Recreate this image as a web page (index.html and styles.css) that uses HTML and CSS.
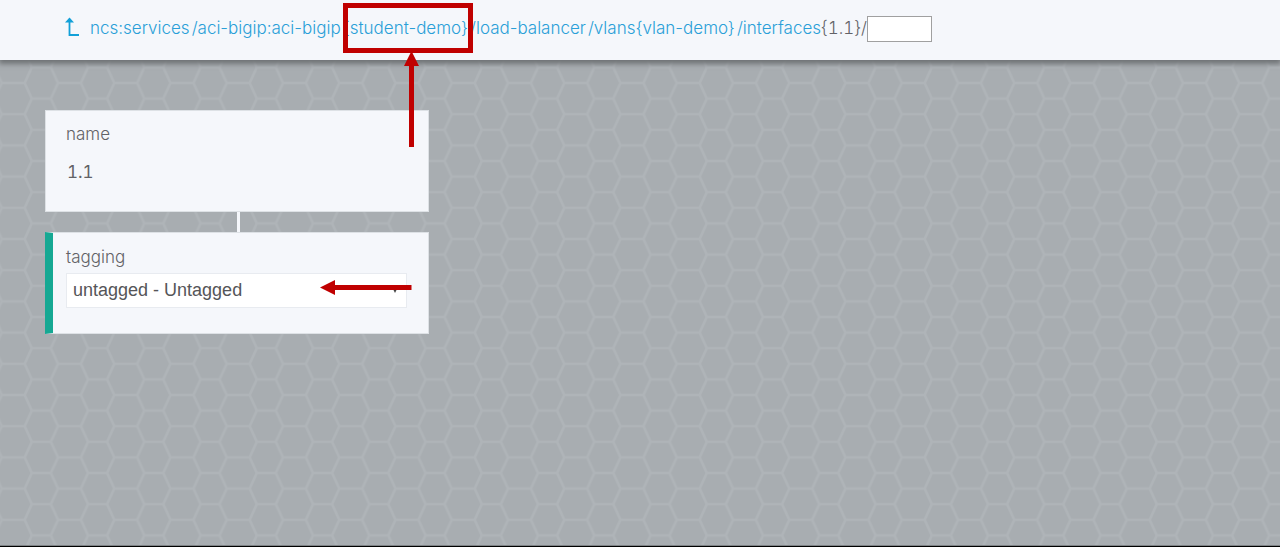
FILE: index.html
```html
<!DOCTYPE html>
<html lang="en">
<head>
<meta charset="utf-8">
<title>interfaces{1.1}</title>
<link rel="stylesheet" href="styles.css">
</head>
<body>
<header class="topbar">
  <a class="up" href="#" aria-label="Up one level">
    <svg width="16" height="20" viewBox="0 0 16 20" aria-hidden="true"><path d="M5.5 4V18H15" fill="none" stroke="#12a0d8" stroke-width="1.8"/><path d="M1 5.4 5.5 0.4 10 5.4Z" fill="#12a0d8"/></svg>
  </a>
  <nav class="path" aria-label="Path">
    <a href="#">ncs:services</a><a href="#">/aci-bigip:aci-bigip</a><a href="#">{student-demo}</a><a href="#">/load-balancer</a><a href="#">/vlans{vlan-demo}</a><a href="#">/interfaces</a><span class="path-key">{1.1}/</span>
  </nav>
  <input class="path-input" type="text" aria-label="Path segment">
</header>
<main class="canvas">
  <svg class="honeycomb" width="100%" height="100%" aria-hidden="true">
    <defs>
      <pattern id="hex" x="13.2" y="7.4" width="56.25" height="31.2" patternUnits="userSpaceOnUse">
        <path d="M-11.5 15.6H11.5L18.6 31.2H37.6L44.8 15.6H67.8M11.5 15.6 18.6 0H37.6L44.8 15.6" fill="none" stroke="#afb4b8" stroke-width="2.6"/>
      </pattern>
    </defs>
    <rect width="100%" height="100%" fill="url(#hex)"/>
  </svg>
  <section class="card">
    <h2 class="label">name</h2>
    <p class="value">1.1</p>
  </section>
  <div class="connector"></div>
  <section class="card card-edited">
    <label class="label" for="tagging">tagging</label>
    <div class="select-wrap">
      <select id="tagging" class="select"><option>untagged - Untagged</option></select>
      <svg class="caret" width="6" height="6" viewBox="0 0 6 6" aria-hidden="true"><path d="M0 0H6L3 6Z" fill="#444"/></svg>
    </div>
  </section>
</main>
<div class="mark-box"></div>
<svg class="mark-up" width="16" height="96" viewBox="0 0 16 96" aria-hidden="true"><path d="M7.5 0 15 15H10V96H5V15H0Z" fill="#c00000"/></svg>
<svg class="mark-left" width="92" height="16" viewBox="0 0 92 16" aria-hidden="true"><path d="M0 7.5 15 0V5H91.5V10H15V15Z" fill="#c00000"/></svg>
</body>
</html>
```
FILE: styles.css
```css
* { box-sizing: border-box; }
body {
  margin: 0;
  min-height: 100vh;
  display: flex;
  flex-direction: column;
  position: relative;
  font-family: Inter, "Liberation Sans", sans-serif;
  color: #626266;
  background: #a8adb1;
}
.topbar {
  display: flex;
  align-items: center;
  height: 60px;
  padding: 0 64px 3px;
  background: #f5f7fb;
  box-shadow: 0 3px 5px 1px #707376;
  position: relative;
  z-index: 1;
}
.up { display: flex; margin-right: 10px; padding-bottom: 3px; }
.path {
  padding-bottom: 1px;
  font-size: 17px;
  line-height: 24px;
  font-weight: 300;
  white-space: nowrap;
}
.path a { color: #2a9fd8; text-decoration: none; }
.path a + a { margin-left: 2px; }
.path-key { font-variant-numeric: tabular-nums; }
.path-input {
  width: 65px;
  height: 26px;
  border: 1px solid #a0a0a0;
  background: #fff;
  font: inherit;
}
.canvas {
  flex: 1;
  position: relative;
  padding: 50px 45px;
  border-bottom: 1px solid #000;
}
.honeycomb { position: absolute; inset: 0; border-bottom: 1px solid #7f8386; }
.card {
  position: relative;
  width: 384px;
  padding: 11px 21px 26px 20px;
  background: #f5f7fb;
  border: 1px solid #dde1e5;
}
.label {
  display: block;
  margin: 0;
  font-size: 17px;
  line-height: 24px;
  font-weight: 300;
}
.value {
  margin: 13px 1px 0;
  font-size: 17px;
  line-height: 26px;
  font-variant-numeric: tabular-nums;
}
.connector {
  position: relative;
  width: 3px;
  height: 20px;
  margin-left: 192px;
  background: #f5f7fb;
}
.card-edited {
  border-left: 8px solid #16a893;
  padding: 12px 21px 25px 13px;
}
.select-wrap { position: relative; margin-top: 4px; }
.select {
  display: block;
  width: 100%;
  height: 35px;
  padding: 0 6px 2px;
  appearance: none;
  border: 1px solid #e8ebf0;
  border-radius: 0;
  background: #fff;
  color: #555558;
  font-family: "Liberation Sans", Arial, sans-serif;
  font-size: 18px;
}
.caret { position: absolute; right: 9px; top: 14px; }
.mark-box {
  position: absolute;
  z-index: 2;
  left: 343px;
  top: 3px;
  width: 130px;
  height: 50px;
  border: 5px solid #c00000;
}
.mark-up { position: absolute; z-index: 2; left: 404px; top: 51px; }
.mark-left { position: absolute; z-index: 2; left: 320px; top: 280px; }
```
